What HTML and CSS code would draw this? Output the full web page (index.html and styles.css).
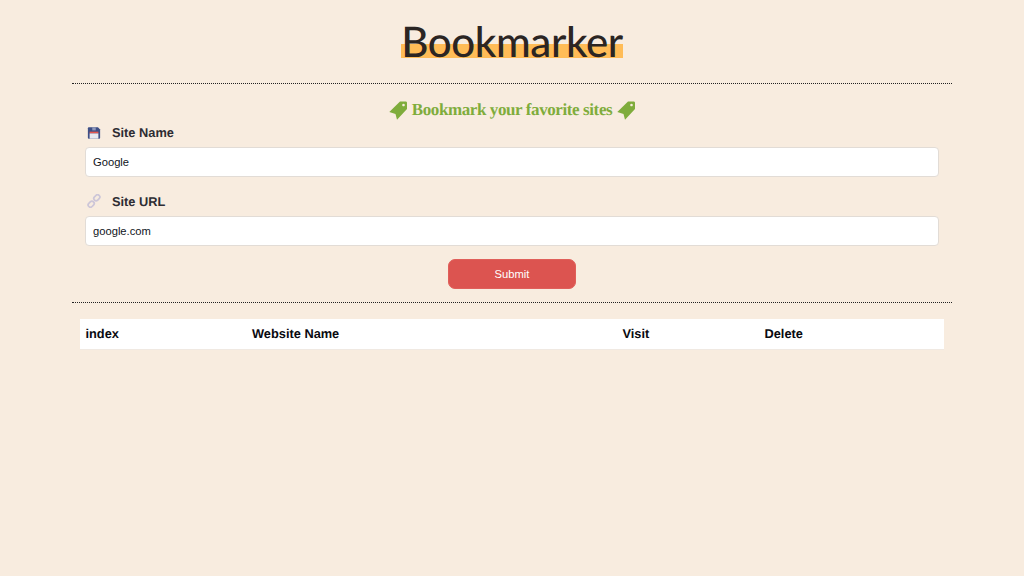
FILE: index.html
```html
<!DOCTYPE html>
<html lang="en">
<head>
<meta charset="utf-8">
<title>Bookmarker</title>
<link rel="stylesheet" href="styles.css">
</head>
<body>
<main class="page">
  <header class="masthead">
    <h1 class="logo">Bookmarker</h1>
  </header>
  <hr class="rule">
  <h2 class="tagline">
    <svg class="tag" viewBox="0 0 18 19"><path fill-rule="evenodd" d="M11 .5h5.500c1 0 1.500.5 1.500 1.500v6L8 18.800 6.500 13 .3 11zM14.500 2.700a1.300 1.300 0 1 0 .01 0z"/></svg>
    <span>Bookmark your favorite sites</span>
    <svg class="tag" viewBox="0 0 18 19"><path fill-rule="evenodd" d="M11 .5h5.500c1 0 1.500.5 1.500 1.500v6L8 18.800 6.500 13 .3 11zM14.500 2.700a1.300 1.300 0 1 0 .01 0z"/></svg>
  </h2>
  <form class="form">
    <div class="field">
      <label class="label" for="name">
        <svg class="icon" viewBox="0 0 16 16">
          <path fill="#3e4f86" d="M1 2.500c0-.6.4-1 1-1h10.500l2.500 2.500v9.500c0 .6-.4 1-1 1H2c-.6 0-1-.4-1-1z"/>
          <rect x="6" y="1.500" width="4" height="3.500" fill="#8f98ba"/>
          <rect x="3" y="6.500" width="10" height="2" fill="#e8564f"/>
          <rect x="3" y="8.500" width="10" height="6" fill="#e6e8f0"/>
        </svg>
        <span>Site Name</span>
      </label>
      <input class="input" id="name" type="text" value="Google">
    </div>
    <div class="field">
      <label class="label" for="url">
        <svg class="icon" viewBox="0 0 16 16" fill="none" stroke="#cdc6d8" stroke-width="2">
          <rect x="7.500" y="1.800" width="7.500" height="5.200" rx="2.600" transform="rotate(-45 11.200 4.400)"/>
          <rect x="1" y="9" width="7.500" height="5.200" rx="2.600" transform="rotate(-45 4.800 11.600)"/>
        </svg>
        <span>Site URL</span>
      </label>
      <input class="input" id="url" type="text" value="google.com">
    </div>
    <button class="submit" type="button">Submit</button>
  </form>
  <hr class="rule">
  <section class="results">
    <table class="table">
      <thead>
        <tr>
          <th class="col-index">index</th>
          <th class="col-name">Website Name</th>
          <th class="col-visit">Visit</th>
          <th class="col-delete">Delete</th>
        </tr>
      </thead>
    </table>
  </section>
</main>
</body>
</html>
```

FILE: styles.css
```css
* { box-sizing: border-box; }
html, body { margin: 0; padding: 0; }
body {
  background: #f8ecdf;
  color: #282828;
  font-family: "Liberation Sans", Arial, sans-serif;
  min-height: 576px;
  text-rendering: geometricPrecision;
}
.page { width: 880px; margin: 0 auto; }
.masthead { display: flex; justify-content: center; height: 83px; padding-top: 15px; }
.logo {
  margin: 0;
  height: 43px;
  width: 222px;
  font-family: "Lato", sans-serif;
  font-weight: 500;
  font-size: 42px;
  line-height: 53px;
  letter-spacing: -0.4px;
  text-align: center;
  white-space: nowrap;
  color: #2b2523;
  background: linear-gradient(#ffbc57, #ffbc57) no-repeat 0 100% / 100% 14px;
}
.rule { margin: 0; height: 1px; border: 0; border-top: 1px dotted #222; }
.tagline {
  margin: 0;
  height: 38px;
  padding-top: 14px;
  display: flex;
  justify-content: center;
  align-items: center;
  gap: 5px;
  font-family: "Liberation Serif", serif;
  font-size: 17px;
  font-weight: 700;
  line-height: 22px;
  letter-spacing: -0.4px;
  color: #7fac3c;
}
.tag { width: 18px; height: 19px; fill: #7fac3c; flex: none; }
.form { padding: 0 13px; display: flex; flex-direction: column; }
.field { display: flex; flex-direction: column; margin-bottom: 13.500px; }
.label {
  display: flex;
  align-items: center;
  gap: 11px;
  height: 21px;
  margin-bottom: 4px;
  padding-left: 2px;
  font-size: 12.800px;
  font-weight: 700;
  color: #2e2c33;
}
.icon { width: 14px; height: 14px; flex: none; }
.input {
  width: 100%;
  height: 30px;
  padding: 0 7px;
  background: #fff;
  border: 1px solid #e2dcd6;
  border-radius: 4px;
  color: #10141c;
  font: 11.200px "Liberation Sans", Arial, sans-serif;
}
.submit {
  align-self: center;
  width: 128px;
  height: 30px;
  margin-bottom: 13px;
  background: #dc5450;
  border: 1px solid #e05f5a;
  border-radius: 7px;
  color: #fff;
  font: 11.200px "Liberation Sans", Arial, sans-serif;
}
.results { padding: 16px 8px 0; }
.table { width: 864px; border-collapse: collapse; table-layout: fixed; background: #fff; }
.table th {
  height: 30px;
  padding: 0 5.500px;
  border-bottom: 1px solid #f0e9e2;
  text-align: left;
  font-size: 12.800px;
  font-weight: 700;
  color: #0a0a10;
}
.col-index { width: 166.500px; }
.col-name { width: 370.500px; }
.col-visit { width: 142px; }
```
